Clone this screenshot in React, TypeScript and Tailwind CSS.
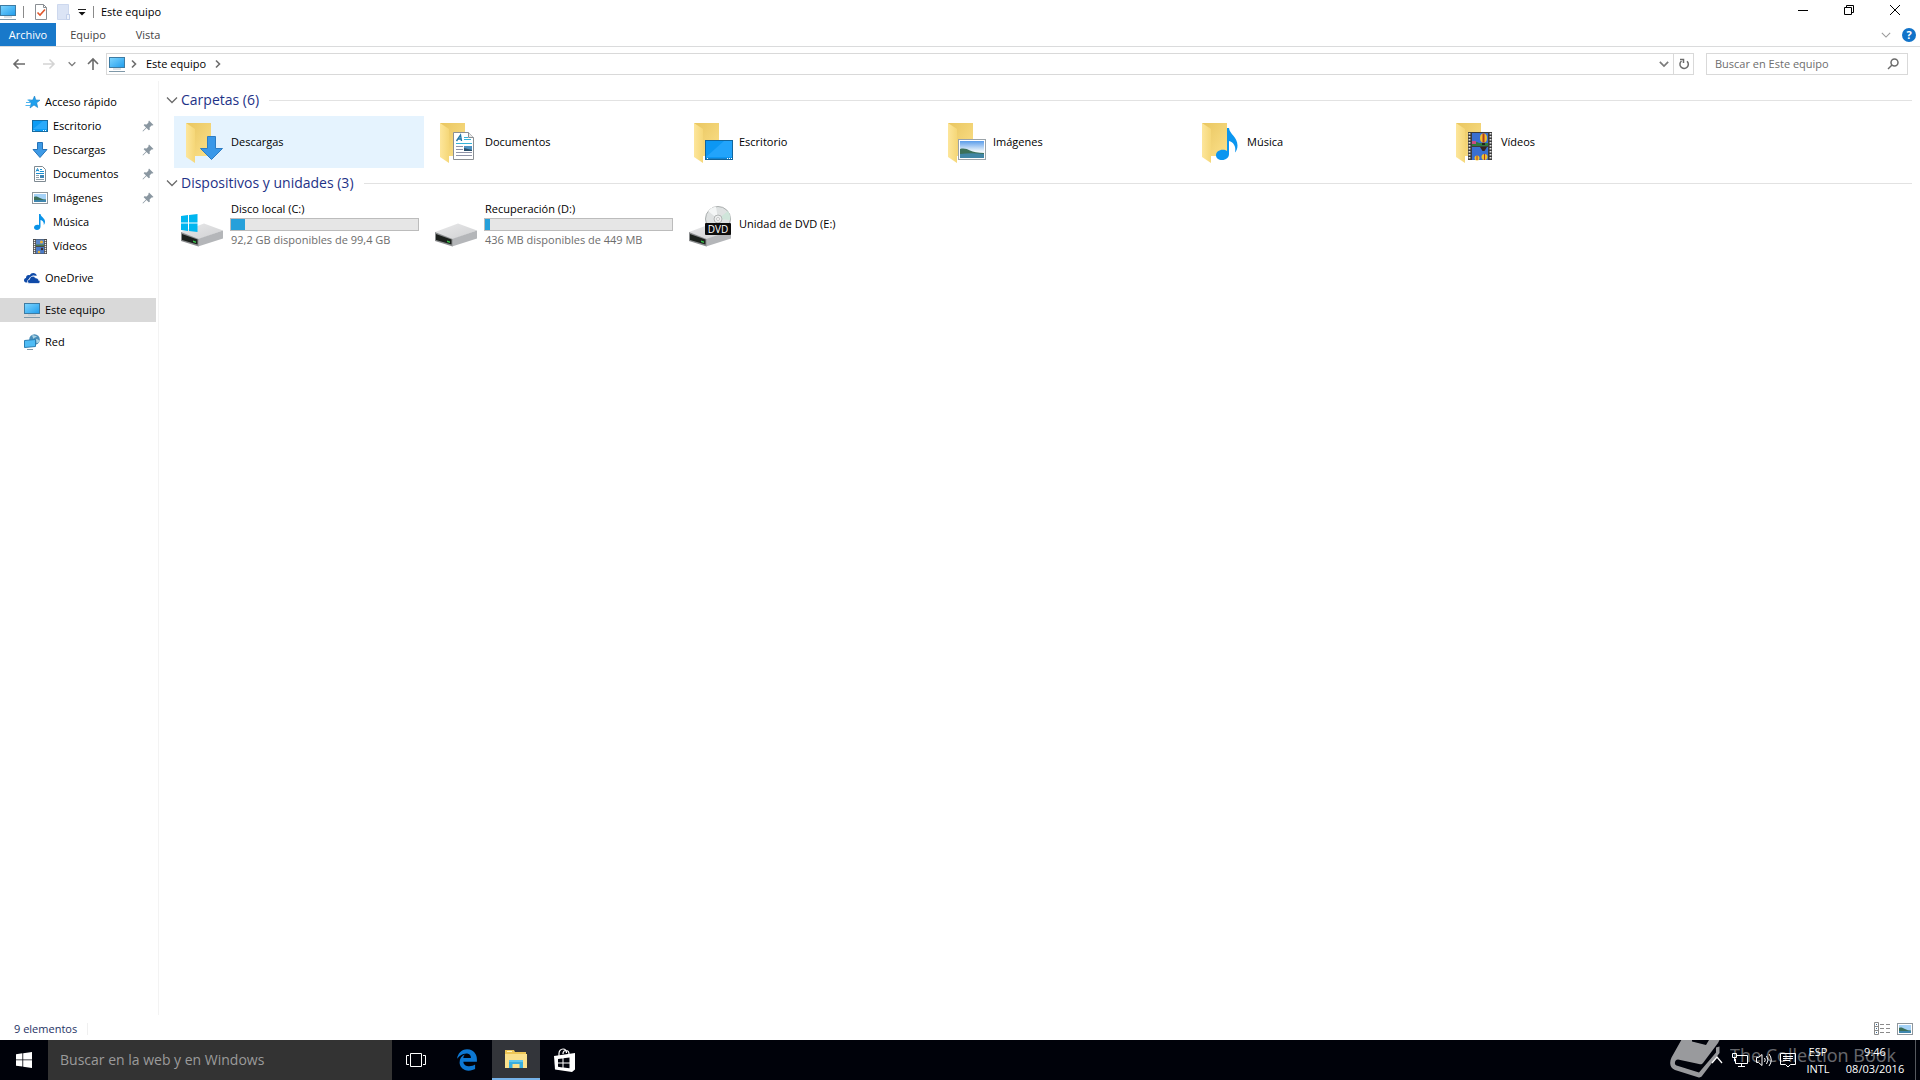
import React, { useState } from 'react';
import { FaEdgeLegacy } from 'react-icons/fa';

type IconProps = { className?: string };

const MonitorIcon = ({ className = 'w-4 h-4' }: IconProps) => (
  <svg viewBox="0 0 16 16" className={className}>
    <defs>
      <linearGradient id="screen" x1="0" y1="0" x2="1" y2="1">
        <stop offset="0" stopColor="#7fd6ff" />
        <stop offset="1" stopColor="#1f9cec" />
      </linearGradient>
    </defs>
    <rect x="0.5" y="1.5" width="15" height="10" fill="url(#screen)" stroke="#3d7ba3" />
    <path d="M4 13h8" stroke="#b9c6cf" />
    <path d="M0 15.500h16" stroke="#7f98a8" />
  </svg>
);

const StarIcon = ({ className = 'w-4 h-4' }: IconProps) => (
  <svg viewBox="0 0 16 16" className={className}>
    <path d="M9.500 2l1.300 4 4.200.2-3.300 2.600 1 4.700-3.700-2.500L5 14l1.200-5L3.500 6.200l4.300-.2z" fill="#1fa0ee" stroke="#1a7fc4" strokeWidth="0.600" />
    <path d="M2.500 6h3M1 8.500h5M.5 11.500h5" stroke="#4db4ee" />
  </svg>
);

const DesktopIcon = ({ className = 'w-4 h-4' }: IconProps) => (
  <svg viewBox="0 0 16 16" className={className}>
    <rect x="0.5" y="2.500" width="15" height="11" fill="#0c9cf5" stroke="#176ba0" />
    <path d="M1 11L11 3h4v8z" fill="#2aaafa" />
    <path d="M1.500 12.500h1M11 12.500h1m1 0h1" stroke="#fff" />
  </svg>
);

const DownIcon = ({ className = 'w-4 h-4' }: IconProps) => (
  <svg viewBox="0 0 16 16" className={className}>
    <path d="M5.500.5h5v7h4.500L8 15.500 1 7.500h4.500z" fill="#3d9ae6" stroke="#2673b8" />
  </svg>
);

const DocIcon = ({ className = 'w-4 h-4' }: IconProps) => (
  <svg viewBox="0 0 16 16" className={className}>
    <path d="M2.500.5h8l3 3v12h-11z" fill="#fff" stroke="#7f8a92" />
    <path d="M4 5.500l1.500-3 1.500 3M4.500 4.500h2M8 3.500h2M8 5.500h4M4 7.500h8" stroke="#1b8fd0" fill="none" />
    <path d="M4 9.500h3M4 11.500h3M4 13.500h8" stroke="#8fa0ab" />
    <rect x="8" y="9" width="4" height="3" fill="#3f86b5" />
  </svg>
);

const PictureIcon = ({ className = 'w-4 h-4' }: IconProps) => (
  <svg viewBox="0 0 16 16" className={className}>
    <rect x="0.500" y="2.500" width="15" height="11" fill="#fff" stroke="#8f979d" />
    <rect x="2" y="4" width="12" height="8" fill="#a5d2f7" />
    <path d="M2 7c2-1 4 0 6 1s4 1.500 6 1.500v1H2z" fill="#3b6e58" />
    <path d="M2 10h12v2H2z" fill="#3f86ae" />
  </svg>
);

const NoteIcon = ({ className = 'w-4 h-4' }: IconProps) => (
  <svg viewBox="0 0 16 16" className={className}>
    <path d="M7 0h1.500c.3 3 4.500 4 4.500 7.500 0 1.500-.5 2.500-1.200 3.500.4-3-1.300-4.500-3.300-5v6.500C8.500 14.500 7 16 5 16c-1.700 0-3-1-3-2.500C2 12 3.500 10.800 5.300 10.800c.7 0 1.200.1 1.700.4z" fill="#0a93e8" />
  </svg>
);

const FilmIcon = ({ className = 'w-4 h-4' }: IconProps) => (
  <svg viewBox="0 0 16 16" className={className}>
    <rect x="1" y="1" width="14" height="15" fill="#4a4a4a" />
    <path d="M2.500 2v14M13.500 2v14" stroke="#f0f0f0" strokeWidth="1.400" strokeDasharray="1.200 0.800" />
    <rect x="4" y="1.500" width="8" height="6.500" fill="#5b87c8" />
    <rect x="4" y="9" width="8" height="6.500" fill="#4a7bc8" />
    <circle cx="9.500" cy="4" r="1.600" fill="#e5b13a" />
    <path d="M4 6.500h8V8H4z" fill="#4a7a4c" />
    <circle cx="7" cy="14" r="1.300" fill="#e5b13a" />
    <circle cx="10" cy="11" r="1.200" fill="#3a2c2c" />
  </svg>
);

const CloudIcon = ({ className = 'w-4 h-4' }: IconProps) => (
  <svg viewBox="0 0 16 16" className={className}>
    <path d="M3 12.500C1.200 12.500 0 11.600 0 10.200 0 9 .8 8.200 2 8c0-1.800 1-3 2.700-3 .4 0 .8 0 1.200.2C6.500 3.800 7.700 3 9.200 3c1.800 0 3.200 1.100 3.600 2.700L9 5.500 5.500 8 4 11z" fill="#0f4aa8" />
    <path d="M6 13.500c-1.500 0-2.500-.8-2.500-2.100 0-1.200.9-2 2-2.100C5.700 7.500 7 6.300 8.700 6.300c1.300 0 2.300.6 2.900 1.700 1.800-.2 2.900.8 2.900 2.200 1 .2 1.500.8 1.500 1.600 0 1-.8 1.700-1.900 1.700z" fill="#0f4aa8" stroke="#fff" strokeWidth="0.700" />
  </svg>
);

const NetworkIcon = ({ className = 'w-4 h-4' }: IconProps) => (
  <svg viewBox="0 0 16 16" className={className}>
    <circle cx="10.500" cy="5.500" r="5.300" fill="#4a8db8" />
    <path d="M8 1.500c2-1 3 .5 5 .5-1 2-3 1-3.500 3zM12 5c2 0 3 1 3.500 2-1 2-2 2-3 2z" fill="#a9d3e4" />
    <path d="M.5 6.500l11-1v7l-11 1z" fill="#4fbcf5" stroke="#2a7fb3" />
    <path d="M3 15.500h6" stroke="#7f98a8" />
  </svg>
);

const PinIcon = ({ className = 'w-3 h-3' }: IconProps) => (
  <svg viewBox="0 0 12 12" className={className}>
    <path d="M7 .5L11.500 5l-1.200.6L9.500 5.500 7.600 7.400l.2 2.300-1 .6-2.300-2.300L1 11.500.5 11 4 7.500 1.700 5.200l.6-1 2.300.2L6.500 2.500 6.400 1.700z" fill="#8a97a1" />
  </svg>
);

const ChevronDown = ({ className = 'w-3 h-3' }: IconProps) => (
  <svg viewBox="0 0 12 12" className={className} fill="none" stroke="currentColor" strokeWidth="1.300">
    <path d="M1 3.500l5 5 5-5" />
  </svg>
);

const ChevronRight = ({ className = 'w-2 h-3' }: IconProps) => (
  <svg viewBox="0 0 8 12" className={className} fill="none" stroke="#6d6d6d" strokeWidth="1.600">
    <path d="M2 2.500L5.500 6 2 9.500" />
  </svg>
);

const FolderSvg = ({ children }: { children: React.ReactNode }) => (
  <svg viewBox="0 0 48 48" className="w-12 h-12 shrink-0">
    <defs>
      <linearGradient id="folderBack" x1="0" y1="0" x2="1" y2="1">
        <stop offset="0" stopColor="#e9c660" />
        <stop offset="1" stopColor="#fbe08a" />
      </linearGradient>
      <linearGradient id="folderFront" x1="0" y1="0" x2="1" y2="0">
        <stop offset="0" stopColor="#fde69b" />
        <stop offset="1" stopColor="#f5d778" />
      </linearGradient>
    </defs>
    <path d="M8 5h25v33H14z" fill="url(#folderBack)" />
    <path d="M8 5l9 6v34L8 39z" fill="url(#folderFront)" />
    {children}
  </svg>
);

const DownloadsFolder = () => (
  <FolderSvg>
    <path d="M29.500 18.500h8v12h7L33.500 41.500 22.500 30.500h7z" fill="#3a98e8" stroke="#2c7cc4" />
  </FolderSvg>
);

const DocumentsFolder = () => (
  <FolderSvg>
    <path d="M21.500 14.500h15l5 5v22h-20z" fill="#fff" stroke="#8b8f93" />
    <path d="M36.500 14.500v5h5" fill="#e8e8e8" stroke="#8b8f93" />
    <path d="M24.500 23l4-6 1 6M25.500 21h4" fill="none" stroke="#2377a8" strokeWidth="1.400" />
    <path d="M32 19.500h4M32 21.500h7M24 25.500h16" stroke="#35b3d8" />
    <path d="M24 28.500h7M24 31.500h7M24 34.500h16M24 37.500h16" stroke="#8f93a8" />
    <rect x="32" y="28" width="8" height="5" fill="#4f93c2" />
    <path d="M32 30l8 2v1h-8z" fill="#2a4f6b" />
  </FolderSvg>
);

const DesktopFolder = () => (
  <FolderSvg>
    <rect x="19.500" y="22.500" width="27" height="19" fill="#0c97f3" stroke="#12659c" />
    <path d="M20 39L38 23h8v16z" fill="#22a4fb" />
    <path d="M20 40.500h26" stroke="#1584cf" />
    <path d="M21 40.500h1M41 40.500h1m1 0h1m1 0h1" stroke="#fff" />
  </FolderSvg>
);

const PicturesFolder = () => (
  <FolderSvg>
    <defs>
      <linearGradient id="sky" x1="0" y1="0" x2="0" y2="1">
        <stop offset="0" stopColor="#5b9dea" />
        <stop offset="0.600" stopColor="#eef6fb" />
      </linearGradient>
    </defs>
    <rect x="18.500" y="21.500" width="27" height="20" fill="#fff" stroke="#9aa3a9" />
    <rect x="20" y="23" width="24" height="17" fill="url(#sky)" />
    <path d="M20 31c4-1 7 0 10 1.500s8 2.500 14 2.500v2H20z" fill="#3b7059" />
    <path d="M20 36c8-1 16-1 24 0v4H20z" fill="#4186a5" />
  </FolderSvg>
);

const MusicFolder = () => (
  <FolderSvg>
    <path d="M33 10h2c.5 6 8.500 9 8.500 17.500 0 3-1 5.500-2.500 7 1.500-6.500-2-10.500-6-11.500v13c0 3.500-3 6-7 6-3.500 0-6-2-6-4.800 0-3 3-5.400 6.800-5.400 1.700 0 3.200.4 4.200 1.200z" fill="#0b96f0" />
  </FolderSvg>
);

const VideosFolder = () => (
  <FolderSvg>
    <rect x="20" y="14" width="24" height="28" fill="#3c3c3c" />
    <path d="M21.500 15v27M42.500 15v27" stroke="#e6e6e6" strokeWidth="1.800" strokeDasharray="1.600 1.400" />
    <rect x="24" y="15" width="16" height="13" fill="#3a6fd0" />
    <rect x="24" y="29" width="16" height="13" fill="#3a6fd0" />
    <path d="M24 24h5l2 1h9v3H24z" fill="#2f7a3d" />
    <path d="M24 23h4v3h-4z" fill="#c84d84" />
    <ellipse cx="35.500" cy="20" rx="3.500" ry="4.500" fill="#f0c02e" />
    <path d="M34.500 15.500h2v9h-2z" fill="#b53a1f" />
    <path d="M34 25h3v2h-3z" fill="#222" />
    <path d="M32 29h7l-2.500 4h-2z" fill="#35231c" />
    <ellipse cx="29" cy="40" rx="2.500" ry="2.500" fill="#f0c02e" />
    <ellipse cx="36.500" cy="39" rx="3" ry="3" fill="#f0c02e" />
    <path d="M28.500 37.500h1V42h-1zM36 36h1v6h-1z" fill="#b53a1f" />
  </FolderSvg>
);

const DriveBody = () => (
  <>
    <defs>
      <linearGradient id="driveTop" x1="0" y1="0" x2="1" y2="1">
        <stop offset="0" stopColor="#e9e9ea" />
        <stop offset="1" stopColor="#cfd0d2" />
      </linearGradient>
    </defs>
    <path d="M3 31L26 22.500l19 7-25 9z" fill="url(#driveTop)" />
    <path d="M20 38l25-8.500v8L20 45.500z" fill="#b4b6b9" />
    <path d="M3 31l17.500 7v7.500L3 40z" fill="#8b8d8f" />
    <path d="M4 33l15.500 5.500v5L4 39z" fill="#1c211d" />
    <path d="M15 39.500l3 1v1.500l-3-1z" fill="#39c24a" />
  </>
);

const WindowsDrive = () => (
  <svg viewBox="0 0 48 48" className="w-12 h-12 shrink-0">
    <DriveBody />
    <path d="M3 15l7-1v7.500H3zM11 14l8.500-1v8.500H11zM3 22.500h7V30l-7-1zM11 22.500h8.500V31L11 30z" fill="#00b6f0" />
  </svg>
);

const PlainDrive = () => (
  <svg viewBox="0 0 48 48" className="w-12 h-12 shrink-0">
    <DriveBody />
  </svg>
);

const DvdDrive = () => (
  <svg viewBox="0 0 48 48" className="w-12 h-12 shrink-0">
    <DriveBody />
    <circle cx="32" cy="18" r="12.500" fill="#dfe2e2" stroke="#a9adad" />
    <path d="M32 18L22 10a12.500 12.500 0 0 1 8-4.300z" fill="#f4f6f6" />
    <path d="M32 18l10-8a12 12 0 0 1 2 9z" fill="#cfe5da" />
    <circle cx="32" cy="18" r="4" fill="#eceeee" stroke="#b3b6b6" />
    <circle cx="32" cy="18" r="1.500" fill="#fff" stroke="#999" strokeWidth="0.500" />
    <rect x="19" y="22" width="26" height="12" rx="1" fill="#0d0d0d" />
    <text x="32" y="32" textAnchor="middle" fontSize="10" fill="#fff" fontFamily="Open Sans, sans-serif">DVD</text>
  </svg>
);

const WindowsLogo = ({ className = 'w-4 h-4' }: IconProps) => (
  <svg viewBox="0 0 16 16" className={className}>
    <path d="M0 2.200L6.400 1.300v6.200H0zM7.200 1.200L16 0v7.500H7.200zM0 8.300h6.400v6.300L0 13.700zM7.200 8.300H16V16l-8.800-1.200z" fill="currentColor" />
  </svg>
);

interface NavEntry {
  name: string;
  icon: React.ReactNode;
  pinned?: boolean;
}

const quickAccess: NavEntry[] = [
  { name: 'Escritorio', icon: <DesktopIcon />, pinned: true },
  { name: 'Descargas', icon: <DownIcon />, pinned: true },
  { name: 'Documentos', icon: <DocIcon />, pinned: true },
  { name: 'Imágenes', icon: <PictureIcon />, pinned: true },
  { name: 'Música', icon: <NoteIcon /> },
  { name: 'Vídeos', icon: <FilmIcon /> }
];

const rootEntries: NavEntry[] = [
  { name: 'OneDrive', icon: <CloudIcon /> },
  { name: 'Este equipo', icon: <MonitorIcon /> },
  { name: 'Red', icon: <NetworkIcon /> }
];

const folders = [
  { name: 'Descargas', icon: <DownloadsFolder /> },
  { name: 'Documentos', icon: <DocumentsFolder /> },
  { name: 'Escritorio', icon: <DesktopFolder /> },
  { name: 'Imágenes', icon: <PicturesFolder /> },
  { name: 'Música', icon: <MusicFolder /> },
  { name: 'Vídeos', icon: <VideosFolder /> }
];

const drives = [
  { name: 'Disco local (C:)', icon: <WindowsDrive />, free: 92.2, total: 99.4, caption: '92,2 GB disponibles de 99,4 GB' },
  { name: 'Recuperación (D:)', icon: <PlainDrive />, free: 436, total: 449, caption: '436 MB disponibles de 449 MB' },
  { name: 'Unidad de DVD (E:)', icon: <DvdDrive /> }
];

const TitleBar = () => (
  <header className="flex h-[23px] items-center">
    <MonitorIcon />
    <div className="ml-[7px] h-3 w-px bg-[#8a8a8a]" />
    <button aria-label="Propiedades" className="ml-[11px]">
      <svg viewBox="0 0 12 16" className="w-3 h-4">
        <path d="M.5.5h8l3 3v12H.5z" fill="#fff" stroke="#8a8f94" />
        <path d="M8.500.5v3h3" fill="none" stroke="#8a8f94" />
        <path d="M2.500 8.500l2.500 2.500 5-5.500" fill="none" stroke="#e0562b" strokeWidth="1.600" />
      </svg>
    </button>
    <button aria-label="Nueva carpeta" className="ml-[10px]">
      <svg viewBox="0 0 13 16" className="w-[13px] h-4">
        <path d="M.5.5h11v10h1v5H.5z" fill="#dbe4f5" stroke="#cdd8ee" />
        <path d="M9.500 10.500h3v5h-3z" fill="#eef3fb" stroke="#c3d0ea" />
      </svg>
    </button>
    <button aria-label="Personalizar barra" className="ml-2">
      <svg viewBox="0 0 8 8" className="w-2 h-2">
        <path d="M0 1.500h8" stroke="#222" />
        <path d="M.5 4h7L4 7.500z" fill="#111" />
      </svg>
    </button>
    <div className="ml-[7px] h-3 w-px bg-[#8a8a8a]" />
    <h1 className="ml-[7px]">Este equipo</h1>
    <div className="ml-auto mr-[2px] flex h-full pb-[3px] text-black">
      <button aria-label="Minimizar" className="flex w-[46px] items-center justify-center">
        <svg viewBox="0 0 10 10" className="w-[10px] h-[10px]"><path d="M0 5.500h10" stroke="currentColor" /></svg>
      </button>
      <button aria-label="Restaurar" className="flex w-[46px] items-center justify-center">
        <svg viewBox="0 0 10 10" className="w-[10px] h-[10px]" fill="none" stroke="currentColor">
          <path d="M.5 2.500h7v7h-7zM2.500 2.500v-2h7v7h-2" />
        </svg>
      </button>
      <button aria-label="Cerrar" className="flex w-[46px] items-center justify-center">
        <svg viewBox="0 0 10 10" className="w-[10px] h-[10px]"><path d="M0 0l10 10M10 0L0 10" stroke="currentColor" /></svg>
      </button>
    </div>
  </header>
);

const RibbonTabs = () => (
  <nav className="flex h-6 items-stretch border-b border-[#dadbdc] text-[#444]">
    <button className="w-14 bg-[#1979ca] text-white">Archivo</button>
    <button className="w-16">Equipo</button>
    <button className="w-14">Vista</button>
    <div className="ml-auto mr-1 flex items-center gap-[11px]">
      <button aria-label="Expandir la cinta"><ChevronDown className="w-[10px] h-[10px] text-[#9a9a9a]" /></button>
      <button aria-label="Ayuda" className="flex h-[14px] w-[14px] items-center justify-center rounded-full bg-[#1173c9] leading-none font-bold text-white">?</button>
    </div>
  </nav>
);

const AddressBar = () => {
  const [query, setQuery] = useState('');

  return (
    <div className="flex h-[34px] items-center pr-3">
      <div className="flex w-[106px] shrink-0 items-center pl-3">
        <button aria-label="Atrás">
          <svg viewBox="0 0 14 12" className="w-[14px] h-3" fill="none" stroke="#6b6b6b" strokeWidth="1.600"><path d="M13 6H2M6.500 1.500L2 6l4.500 4.500" /></svg>
        </button>
        <button aria-label="Adelante" className="ml-4">
          <svg viewBox="0 0 14 12" className="w-[14px] h-3" fill="none" stroke="#d4d4d4" strokeWidth="1.600"><path d="M1 6h11M7.500 1.500L12 6l-4.500 4.500" /></svg>
        </button>
        <button aria-label="Ubicaciones recientes" className="ml-3">
          <ChevronDown className="w-2 h-2 stroke-2 text-[#7a7a7a]" />
        </button>
        <button aria-label="Subir" className="ml-[10px]">
          <svg viewBox="0 0 14 14" className="w-[14px] h-[14px]" fill="none" stroke="#6b6b6b" strokeWidth="1.600"><path d="M7 13V2M2 7l5-5 5 5" /></svg>
        </button>
      </div>
      <div className="flex h-[22px] flex-1 items-center border border-[#d9d9d9] pl-[2px]">
        <MonitorIcon />
        <ChevronRight className="ml-[5px] w-2 h-3" />
        <button className="ml-2">Este equipo</button>
        <ChevronRight className="ml-2 w-2 h-3" />
        <button aria-label="Historial" className="ml-auto mr-1">
          <ChevronDown className="w-[10px] h-[10px] stroke-2 text-[#7a7a7a]" />
        </button>
        <button aria-label="Actualizar" className="flex h-full w-5 items-center justify-center border-l border-[#d9d9d9]">
          <svg viewBox="0 0 12 12" className="w-3 h-3" fill="none" stroke="#6b6b6b" strokeWidth="1.500">
            <path d="M9 3.200A4.200 4.200 0 1 1 3.500 3" />
            <path d="M2 1.500h3.500V5" />
          </svg>
        </button>
      </div>
      <label className="ml-3 flex h-[22px] w-[202px] items-center border border-[#d9d9d9] px-2">
        <input
          type="text"
          aria-label="Buscar en Este equipo"
          placeholder="Buscar en Este equipo"
          value={query}
          onChange={(e) => setQuery(e.target.value)}
          className="min-w-0 flex-1 outline-none placeholder:text-[#6d6d6d]"
        />
        <svg viewBox="0 0 12 12" className="w-3 h-3" fill="none" stroke="#6b6b6b" strokeWidth="1.500">
          <circle cx="7.500" cy="4.500" r="3.500" />
          <path d="M5 7L1 11" />
        </svg>
      </label>
    </div>
  );
};

const Sidebar = () => (
  <aside className="w-[159px] shrink-0 border-r border-[#f3f3f3] pt-[9px] pr-[2px]">
    <a href="#acceso" className="flex h-6 items-center pl-[25px]">
      <StarIcon />
      <span className="ml-1">Acceso rápido</span>
    </a>
    <ul>
      {quickAccess.map((entry) => (
        <li key={entry.name}>
          <a href={`#${entry.name}`} className="flex h-6 items-center pl-8">
            {entry.icon}
            <span className="ml-[5px]">{entry.name}</span>
            {entry.pinned && <PinIcon className="ml-auto mr-[2px] w-3 h-3" />}
          </a>
        </li>
      ))}
    </ul>
    <ul className="mt-2 space-y-2">
      {rootEntries.map((entry) => (
        <li key={entry.name}>
          <a
            href={`#${entry.name}`}
            className={`flex h-6 items-center pl-6 ${entry.name === 'Este equipo' ? 'bg-[#d9d9d9]' : ''}`}
          >
            {entry.icon}
            <span className="ml-[5px]">{entry.name}</span>
          </a>
        </li>
      ))}
    </ul>
  </aside>
);

const GroupHeader = ({ title }: { title: string }) => (
  <div className="mb-[5px] flex h-[22px] items-center">
    <ChevronDown className="w-3 h-3 text-[#6b6b6b]" />
    <h2 className="ml-[3px] text-[14px] text-[#1e3287]">{title}</h2>
    <div className="ml-[10px] h-px flex-1 bg-[#e2e2e2]" />
  </div>
);

const Content = () => (
  <main className="flex-1 pt-2 pl-[7px] pr-2">
    <section>
      <GroupHeader title="Carpetas (6)" />
      <div className="flex flex-wrap gap-1 pl-2">
        {folders.map((folder, i) => (
          <button
            key={folder.name}
            className={`flex h-[52px] w-[250px] items-center pl-1 text-left ${i === 0 ? 'bg-[#e5f3fe]' : ''}`}
          >
            {folder.icon}
            <span className="ml-[5px]">{folder.name}</span>
          </button>
        ))}
      </div>
    </section>
    <section className="mt-1">
      <GroupHeader title="Dispositivos y unidades (3)" />
      <div className="flex flex-wrap gap-1 pl-2">
        {drives.map((drive) => (
          <button key={drive.name} className="flex h-[52px] w-[250px] items-center pl-1 text-left">
            {drive.icon}
            <div className="ml-1 flex-1 pr-[5px] pb-[2px]">
              <div className="pl-px leading-4">{drive.name}</div>
              {drive.total && (
                <>
                  <div className="mt-px h-[13px] border border-[#bcbcbc] bg-[#e6e6e6]">
                    <div
                      className="h-full bg-[#26a0da]"
                      style={{ width: `${((drive.total - drive.free) / drive.total) * 100}%` }}
                    />
                  </div>
                  <div className="mt-px pl-px leading-4 text-[#6d6d6d]">{drive.caption}</div>
                </>
              )}
            </div>
          </button>
        ))}
      </div>
    </section>
  </main>
);

const StatusBar = () => (
  <footer className="flex h-[25px] items-center pt-[2px] pr-[7px] text-[#1e3264]">
    <span className="pl-[14px]">9 elementos</span>
    <div className="ml-[10px] h-3 w-px bg-[#f0f0f0]" />
    <button aria-label="Detalles" className="ml-auto">
      <svg viewBox="0 0 17 13" className="w-[17px] h-[13px]" fill="none" stroke="#8a8a8a">
        <path d="M.5.500h4v12h-4zM.5 4.500h4M.5 8.500h4M6 2.500h4m2 0h4M6 6.500h4m2 0h4M6 10.500h4m2 0h4" />
        <path d="M2 2.500h1M2 6.500h1M2 10.500h1" stroke="#3b6e98" />
      </svg>
    </button>
    <button aria-label="Iconos grandes" className="ml-[6px]">
      <PictureIcon />
    </button>
  </footer>
);

const Taskbar = () => (
  <div className="relative flex h-10 items-stretch overflow-hidden bg-[#00020a] text-white">
    <button aria-label="Inicio" className="flex w-12 items-center justify-center"><WindowsLogo /></button>
    <input
      type="text"
      aria-label="Buscar en la web y en Windows"
      placeholder="Buscar en la web y en Windows"
      className="w-[344px] bg-[#333] px-3 text-[14px] outline-none placeholder:text-[#9b9b9b]"
    />
    <button aria-label="Vista de tareas" className="flex w-12 items-center justify-center">
      <svg viewBox="0 0 20 14" className="w-5 h-[14px]" fill="none" stroke="#fff">
        <path d="M4.500.5h11v13h-11zM3 2.500H.5v9H3M17 2.500h2.500v9H17" />
      </svg>
    </button>
    <button aria-label="Microsoft Edge" className="flex w-[52px] items-center justify-center pl-[2px]">
      <FaEdgeLegacy className="h-[22px] w-[22px] text-[#0d78d3]" />
    </button>
    <button aria-label="Explorador de archivos" className="flex w-12 items-center justify-center border-b-2 border-[#76b2e8] bg-[#33353a]">
      <svg viewBox="0 0 22 20" className="w-[22px] h-5">
        <path d="M0 1h9l1 2h11v16H0z" fill="#edc657" />
        <path d="M2 2h5v1H2z" fill="#fff3c0" />
        <path d="M0 5h22v14H0z" fill="#fae08c" />
        <path d="M4 11h14v8h-3.500v-4h-7v4H4z" fill="#38aee0" />
        <path d="M4 11h14v2H4z" fill="#5fc7ee" />
      </svg>
    </button>
    <button aria-label="Tienda" className="flex w-12 items-center justify-center pl-[2px]">
      <svg viewBox="0 0 22 24" className="w-[22px] h-6">
        <path d="M5 8V5.500C5 3 6.500 1 9 1s3.500 1.500 3.500 4M9 6c0-2 1.200-3.500 3-3.500S15 4 15 6v1" fill="none" stroke="#fff" strokeWidth="1.200" />
        <path d="M0 8l21-3v16.500L18 24 1 21.500z" fill="#fff" />
        <path d="M4 11l4.500-.6v4.100H4zM9.500 10.300l6-.8v5H9.500zM4 15.500h4.500v3.900L4 18.800zM9.500 15.500h6v4.800l-6-.8z" fill="#00020a" />
      </svg>
    </button>
    <div className="ml-auto flex items-center">
      <button aria-label="Mostrar iconos ocultos">
        <svg viewBox="0 0 12 12" className="w-3 h-3" fill="none" stroke="#fff" strokeWidth="1.300"><path d="M1 9l5-6 5 6" /></svg>
      </button>
      <button aria-label="Red" className="ml-[9px]">
        <svg viewBox="0 0 16 14" className="w-4 h-[14px]" fill="none" stroke="#fff">
          <path d="M5 2.500h10.500v8h-12V6M9.500 10.500v3M6 13.500h7M.5.500h4v4h-4zM2.500 4.500V8" />
        </svg>
      </button>
      <button aria-label="Volumen" className="ml-2">
        <svg viewBox="0 0 17 14" className="w-[17px] h-[14px]" fill="none" stroke="#fff">
          <path d="M.5 4.500h2l3.500-3v11l-3.500-3h-2zM8.500 5q1.500 2 0 4M10.500 3q3 4 0 8M13 1q4.500 6 0 12" />
        </svg>
      </button>
      <button aria-label="Centro de actividades" className="ml-[7px]">
        <svg viewBox="0 0 16 16" className="w-4 h-4" fill="none" stroke="#fff">
          <path d="M.5 1.500h15v11h-5L8 15l-2.500-2.500h-5zM3 4.500h10M3 6.500h10M3 8.500h7" />
        </svg>
      </button>
      <button className="ml-[7px] w-[30px] text-center leading-[17px]">
        ESP<br />INTL
      </button>
      <button className="ml-[10px] w-16 text-center leading-[17px] whitespace-nowrap">
        9:46<br />08/03/2016
      </button>
      <div className="ml-2 mr-1 h-10 w-px bg-[#55585e]" />
    </div>
    {/* translucent brand mark lying over the tray */}
    <div className="pointer-events-none absolute top-0 right-6 flex h-10 gap-[10px] text-white">
      <svg viewBox="0 0 50 40" className="h-10 w-[50px] opacity-60">
        <path
          d="M13-3h38l-3 6-15 20c-1 1.200-2 1.500-4 1L8 19.500c-3 0-4.500 4.500-1.500 6L29 32.500l17-20V7.500l3.500-1V13L32 36c-1.200 1.500-2.500 1.700-4 1.200L5 30c-5-2-6-7-3.500-12.500z"
          fill="#fff"
        />
        <path d="M22 0h17l-3 5-14-3.500z" fill="#00020a" />
      </svg>
      <span className="self-start pt-[3px] text-[18px] leading-6 opacity-40">The Collection Book</span>
    </div>
  </div>
);

const App: React.FC = () => {
  return (
    <div className="flex min-h-screen flex-col bg-white font-['Open_Sans','Noto_Sans',sans-serif] text-[11px] leading-4 text-black">
      <TitleBar />
      <RibbonTabs />
      <AddressBar />
      <div className="flex flex-1">
        <Sidebar />
        <Content />
      </div>
      <StatusBar />
      <Taskbar />
    </div>
  );
};

export default App;
